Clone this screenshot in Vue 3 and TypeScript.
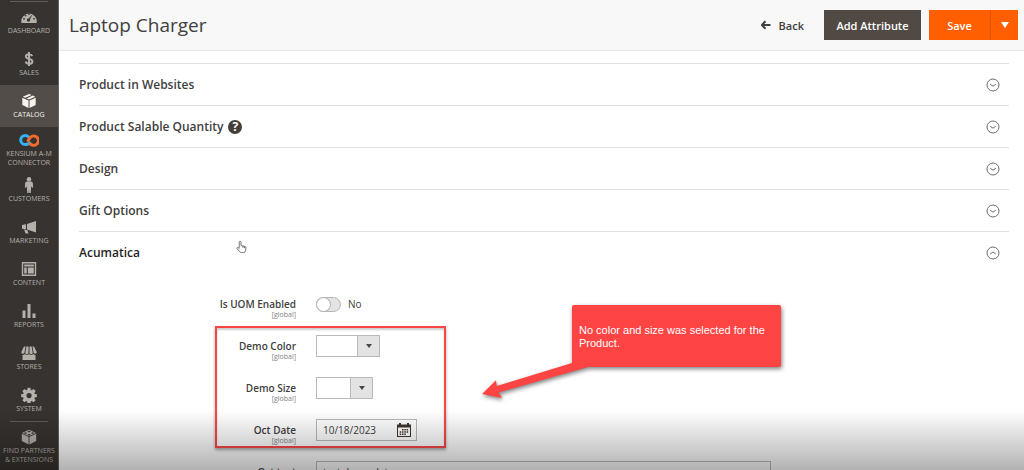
<script setup lang="ts">
import { ref } from 'vue'

interface MenuItem {
  id: string
  label: string
  active?: boolean
}

const menu: MenuItem[] = [
  { id: 'dashboard', label: 'Dashboard' },
  { id: 'sales', label: 'Sales' },
  { id: 'catalog', label: 'Catalog', active: true },
  { id: 'kensium', label: 'Kensium A-M Connector' },
  { id: 'customers', label: 'Customers' },
  { id: 'marketing', label: 'Marketing' },
  { id: 'pages', label: 'Content' },
  { id: 'reports', label: 'Reports' },
  { id: 'stores', label: 'Stores' },
  { id: 'system', label: 'System' },
  { id: 'partners', label: 'Find Partners & Extensions' },
]

const sections = [
  { title: 'Product in Websites', help: false, open: false },
  { title: 'Product Salable Quantity', help: true, open: false },
  { title: 'Design', help: false, open: false },
  { title: 'Gift Options', help: false, open: false },
  { title: 'Acumatica', help: false, open: true },
]

const uom = ref(false)
const color = ref('')
const size = ref('')
const octDate = ref('10/18/2023')
const octText = ref('test demo data')
</script>

<template>
  <div class="page">
    <nav class="sidebar" aria-label="Main menu">
      <a v-for="item in menu" :key="item.id" href="#" class="item" :class="[item.id, { active: item.active }]">
        <svg v-if="item.id === 'dashboard'" viewBox="0 0 16 16" class="icon">
          <path fill-rule="evenodd" d="M.5 14a7.700 7.700 0 1 1 15 0zM7.900 4.300a.8.8 0 1 0 .2 0zM4.500 5.700a.8.8 0 1 0 .2 0zM2.900 9a.8.8 0 1 0 .2 0zM12.900 9a.8.8 0 1 0 .2 0zM11.800 5 7.600 9.500a1.600 1.600 0 1 0 1.300.8z" />
        </svg>
        <svg v-else-if="item.id === 'sales'" viewBox="0 0 16 16" class="icon line">
          <path d="M11.200 5.200C10.700 3.800 9.600 3.300 8 3.300c-1.900 0-3.100.8-3.100 2.200 0 3.200 6.500 1.500 6.500 4.900 0 1.500-1.300 2.400-3.300 2.400-1.800 0-3.100-.8-3.500-2.300M8 1v14" />
        </svg>
        <svg v-else-if="item.id === 'catalog'" viewBox="0 0 16 16" class="icon">
          <path d="M8 1 10.600 2.100 4.300 4.800 1.800 3.700zM11.800 2.600 14.200 3.700 8 6.400 5.600 5.400zM1.300 4.700 7.500 7.400V15L1.300 12zM14.700 4.700 8.500 7.400V15l6.200-3z" />
        </svg>
        <svg v-else-if="item.id === 'kensium'" viewBox="0 0 20 12" class="icon wide">
          <path class="blue" d="M11.500 8.200C10.200 10 8.500 10.600 6.300 10.600a4.600 4.600 0 0 1 0-9.200c1.800 0 2.800.8 3.700 2" />
          <path class="orange" d="M8.500 7.800 11 3.700a4.700 4.700 0 1 1-.4 5.200" />
        </svg>
        <svg v-else-if="item.id === 'customers'" viewBox="0 0 16 16" class="icon">
          <circle cx="8" cy="2.200" r="2.200" />
          <path d="M5.800 4.600h4.400q1.400 0 1.600 1.500l.4 4.300-1.200.3-.8-2-.4 7.300H8.300L8 12l-.3 4H6.200l-.4-7.300-.8 2-1.200-.3.4-4.300q.2-1.500 1.600-1.500z" />
        </svg>
        <svg v-else-if="item.id === 'marketing'" viewBox="0 0 16 16" class="icon">
          <path d="M15 2v11.500L6 10.600V5.100zM1 6l4-.7v5L1 9.700zM3 10.500l3.500.8 1 3.200H4.600z" />
        </svg>
        <svg v-else-if="item.id === 'pages'" viewBox="0 0 16 16" class="icon">
          <path fill-rule="evenodd" d="M.8 1h14.400v14H.8zM2.200 2.400v11.200h11.600V2.400zM3.200 3.500h9.600v2H3.200zM3.200 6.500h2.500v6H3.200zM6.800 6.500h6v6h-6z" />
        </svg>
        <svg v-else-if="item.id === 'reports'" viewBox="0 0 16 16" class="icon">
          <path d="M1.500 7.500h3V15h-3zM6.500 1h3v14h-3zM11.500 10.500h3V15h-3z" />
        </svg>
        <svg v-else-if="item.id === 'stores'" viewBox="0 0 16 16" class="icon">
          <path d="M3 1.500h1.500L3.400 7.800a1.700 1.700 0 0 1-3.200-.5zM5.400 1.500h2.100v6a1.600 1.600 0 0 1-3.200.2zM8.500 1.500h2.100l1.100 6.200a1.600 1.600 0 0 1-3.200-.2zM11.500 1.500H13l2.800 5.800a1.700 1.700 0 0 1-3.200.5zM1.500 10q1.400.1 2.300-1 2.100 1.800 4.200 0 2.100 1.800 4.200 0 .9 1.100 2.300 1v5h-13z" />
        </svg>
        <svg v-else-if="item.id === 'system'" viewBox="0 0 16 16" class="icon">
          <path fill-rule="evenodd" d="M6.600.8h2.800l.4 2.100 1 .4 1.800-1.200 2 2-1.200 1.800.4 1 2.100.4v2.800l-2.100.4-.4 1 1.200 1.800-2 2-1.800-1.200-1 .4-.4 2.100H6.600l-.4-2.100-1-.4-1.800 1.200-2-2 1.200-1.800-.4-1-2.100-.4V7.300l2.100-.4.4-1-1.200-1.800 2-2 1.800 1.200 1-.4zM8 6a2.600 2.600 0 1 0 .1 0z" />
        </svg>
        <svg v-else viewBox="0 0 16 16" class="icon">
          <path fill-rule="evenodd" d="M8 .8 15 4 8 7.200 1 4zM8 1.700a1.500.7 0 1 0 .1 0zM4.400 3.300a1.500.7 0 1 0 .1 0zM11.600 3.300a1.500.7 0 1 0 .1 0zM8 4.900a1.500.7 0 1 0 .1 0zM.8 4.800 7.600 8v7.500L.8 12zM15.200 4.800 8.400 8v7.500l6.800-3.500z" />
        </svg>
        <span>{{ item.label }}</span>
      </a>
    </nav>

    <div class="main">
      <header class="header">
        <h1>Laptop Charger</h1>
        <button type="button" class="back">
          <svg viewBox="0 0 10 10"><path d="M9.500 5H1M4.500 1.200.8 5l3.700 3.800" /></svg>
          Back
        </button>
        <button type="button" class="btn dark">Add Attribute</button>
        <div class="split">
          <button type="button" class="btn save">Save</button>
          <button type="button" class="btn more" aria-label="More save options">
            <svg viewBox="0 0 8 6"><path d="M0 0h8L4 6z" /></svg>
          </button>
        </div>
      </header>

      <main class="content">
        <h2 v-for="s in sections" :key="s.title" class="section">
          <button type="button" :aria-expanded="s.open" :class="{ open: s.open }">
            <span>{{ s.title }}</span>
            <span v-if="s.help" class="help">?</span>
            <svg viewBox="0 0 14 14" class="chevron">
              <circle cx="7" cy="7" r="6" />
              <path :d="s.open ? 'M4.200 8 7 6l2.800 2' : 'M4.200 6.200 7 8.200l2.800-2'" />
            </svg>
          </button>
        </h2>

        <form class="form" @submit.prevent>
          <div class="field">
            <label for="uom">Is UOM Enabled<small>[global]</small></label>
            <div class="switch">
              <input id="uom" v-model="uom" type="checkbox" />
              <span>{{ uom ? 'Yes' : 'No' }}</span>
            </div>
          </div>
          <div class="marked">
            <div class="field">
              <label for="color">Demo Color<small>[global]</small></label>
              <div class="select color">
                <select id="color" v-model="color"><option value=""></option></select>
                <svg viewBox="0 0 6 4"><path d="M0 0h6L3 4z" /></svg>
              </div>
            </div>
            <div class="field">
              <label for="size">Demo Size<small>[global]</small></label>
              <div class="select size">
                <select id="size" v-model="size"><option value=""></option></select>
                <svg viewBox="0 0 6 4"><path d="M0 0h6L3 4z" /></svg>
              </div>
            </div>
            <div class="field">
              <label for="date">Oct Date<small>[global]</small></label>
              <div class="date">
                <input id="date" v-model="octDate" type="text" />
                <button type="button" aria-label="Choose date">
                  <svg viewBox="0 0 14 14">
                    <path fill-rule="evenodd" d="M0 1.500h2V0h2v1.500h6V0h2v1.500h2V14H0zM1 4.500V13h12V4.500z" />
                    <path d="M5 6h1.500v1.500H5zM7.300 6h1.500v1.500H7.300zM9.600 6h1.500v1.500H9.600zM2.700 8.300h1.500v1.500H2.700zM5 8.300h1.500v1.500H5zM7.300 8.300h1.500v1.500H7.300zM9.600 8.300h1.500v1.500H9.600zM2.700 10.600h1.500v1.500H2.700zM5 10.600h1.500v1.500H5zM7.300 10.600h1.500v1.500H7.300z" />
                  </svg>
                </button>
              </div>
            </div>
            <div class="frame"></div>
          </div>
          <div class="field">
            <label for="text">Oct text</label>
            <input id="text" v-model="octText" type="text" class="text" />
          </div>
        </form>
      </main>
    </div>

    <svg class="cursor" viewBox="0 0 12 14">
      <path d="M3.500 8.500V2q0-1.200 1-1.200t1 1.200v3.500l4.200.8q1.300.3 1.200 1.600l-.5 3.200q-.3 2-2.200 2H6q-1.300 0-2-1L1 8.600q-.3-1 .8-1 .8.100 1.700 1.200M7.500 6v2M9.300 6.400v1.800" />
    </svg>

    <div class="callout">
      <svg viewBox="0 0 106 40"><path d="M0 31 14 17.200 14.800 23 90 0 106 4 16.500 29.500 20 35z" /></svg>
      <p>No color and size was selected for the Product.</p>
    </div>
    <div class="shade"></div>
  </div>
</template>

<style>
body {
  margin: 0;
}
</style>

<style scoped>
* {
  box-sizing: border-box;
}
.page {
  position: relative;
  display: flex;
  height: 100vh;
  overflow: hidden;
  background: #fff;
  color: #41403e;
  font-family: "Open Sans", "Noto Sans", sans-serif;
  font-size: 10px;
}
button,
input,
select {
  font: inherit;
  color: inherit;
  margin: 0;
  padding: 0;
  border: 0;
  border-radius: 0;
  background: none;
}
.sidebar {
  flex: none;
  width: 59px;
  padding-top: 1px;
  background: #373330;
  border-right: 1px solid #65625f;
}
.item {
  position: relative;
  display: flex;
  flex-direction: column;
  align-items: center;
  height: 42px;
  padding-top: 8px;
  color: #b4b0aa;
  font-size: 7px;
  line-height: 9px;
  text-align: center;
  text-decoration: none;
  text-transform: uppercase;
}
.item.active {
  background: #524d49;
  color: #f7f3eb;
}
.item span {
  margin-top: 1px;
}
.item.kensium {
  padding-top: 5px;
}
.item.dashboard::before,
.item.partners::before {
  content: "";
  position: absolute;
  top: 0;
  left: 10px;
  right: 10px;
  border-top: 1px solid #5f5b57;
}
.icon {
  flex: none;
  width: 16px;
  height: 16px;
  fill: currentColor;
}
.icon.line {
  fill: none;
  stroke: currentColor;
  stroke-width: 2;
}
.icon.wide {
  width: 20px;
  fill: none;
  stroke-width: 3;
}
.blue {
  stroke: #35b2f2;
}
.orange {
  stroke: #f26b2c;
}
.main {
  flex: 1;
  min-width: 0;
}
.header {
  display: flex;
  align-items: center;
  height: 51px;
  padding: 0 6px 0 10px;
  background: #f8f8f8;
  border-bottom: 1px solid #e6e6e6;
}
h1 {
  flex: 1;
  margin: 0;
  font-size: 19px;
  font-weight: 400;
}
.back {
  display: flex;
  align-items: center;
  gap: 8px;
  margin-right: 20px;
  font-size: 11px;
  font-weight: 600;
}
.back svg {
  width: 10px;
  height: 10px;
  fill: none;
  stroke: currentColor;
  stroke-width: 2;
}
.btn {
  height: 30px;
  color: #fff;
  font-size: 11px;
  font-weight: 600;
}
.dark {
  width: 97px;
  margin-right: 8px;
  background: #514943;
}
.split {
  display: flex;
}
.save {
  width: 61px;
  background: #ff5f00;
}
.more {
  display: flex;
  align-items: center;
  justify-content: center;
  width: 28px;
  background: #ff5f00;
  border-left: 1px solid #df5200;
}
.more svg {
  width: 8px;
  height: 6px;
  fill: #fff;
}
.content {
  padding: 12px 15px 0 20px;
}
.section {
  margin: 0;
  border-top: 1px solid #e0e0e0;
  font-size: 12px;
  font-weight: 600;
}
.section button {
  display: flex;
  align-items: center;
  gap: 5px;
  width: 100%;
  height: 41px;
  padding-right: 9px;
}
.section .open {
  color: #1f1f1f;
}
.help {
  width: 14px;
  height: 14px;
  border-radius: 50%;
  background: #463f39;
  color: #fff;
  font-size: 12px;
  font-weight: 700;
  line-height: 14px;
}
.chevron {
  width: 14px;
  height: 14px;
  margin-left: auto;
  fill: none;
  stroke: #6d6d6d;
}
.form {
  padding-top: 20px;
}
.field {
  display: grid;
  grid-template-columns: 217px minmax(0, 455px);
  column-gap: 20px;
  align-items: start;
  height: 42px;
}
.field label {
  padding-top: 4px;
  font-weight: 600;
  line-height: 14px;
  text-align: right;
}
.field small {
  display: block;
  color: #808080;
  font-size: 7px;
  font-weight: 400;
  line-height: 8px;
}
.switch {
  display: flex;
  align-items: center;
  gap: 7px;
  height: 22px;
}
.switch input {
  display: flex;
  width: 25px;
  height: 15px;
  appearance: none;
  border: 1px solid #b5b5b5;
  border-radius: 8px;
  background: #e3e3e3;
}
.switch input::before {
  content: "";
  width: 13px;
  height: 13px;
  border-radius: 50%;
  background: #fff;
  box-shadow: 0 0 0 1px #b5b5b5;
}
.switch input:checked {
  justify-content: flex-end;
}
.marked {
  position: relative;
}
.frame {
  position: absolute;
  top: -9px;
  bottom: 13px;
  left: 136px;
  width: 231px;
  border: 2px solid #fb4646;
  box-shadow: 0 2px 3px rgba(0, 0, 0, 0.35), inset 0 2px 2px rgba(0, 0, 0, 0.2);
  pointer-events: none;
}
.select {
  position: relative;
  height: 22px;
}
.select.color {
  width: 64px;
}
.select.size {
  width: 57px;
}
.select select {
  display: block;
  width: 100%;
  height: 22px;
  appearance: none;
  border: 1px solid #b9b9b9;
  background: linear-gradient(to left, #e3e3e3 21px, #b9b9b9 21px, #b9b9b9 22px, #fff 22px);
}
.select svg {
  position: absolute;
  top: 9px;
  right: 8px;
  width: 6px;
  height: 4px;
  fill: #4c4742;
  pointer-events: none;
}
.date {
  display: flex;
  align-items: center;
  width: 101px;
  height: 22px;
  padding: 0 5px 0 6px;
  border: 1px solid #b9b9b9;
}
.date input {
  flex: 1;
  min-width: 0;
}
.date button {
  height: 14px;
}
.date svg {
  display: block;
  width: 14px;
  height: 14px;
  fill: #41362f;
}
.text {
  width: 100%;
  height: 22px;
  padding: 0 6px;
  border: 1px solid #b9b9b9;
}
.cursor {
  position: absolute;
  top: 240px;
  left: 236px;
  width: 11px;
  height: 14px;
  fill: #fff;
  stroke: #666;
}
.callout {
  position: absolute;
  top: 305px;
  left: 572px;
  width: 209px;
  height: 62px;
  padding: 19px 7px;
  border-radius: 2px;
  background: #ff4444;
  color: #fff;
  font-family: "Liberation Sans", Arial, sans-serif;
  font-size: 11px;
  line-height: 13px;
  filter: drop-shadow(1px 2px 2px rgba(0, 0, 0, 0.5));
}
.callout p {
  margin: 0;
}
.callout svg {
  position: absolute;
  top: 58px;
  left: -90px;
  width: 106px;
  height: 40px;
  fill: #ff4444;
}
.shade {
  position: absolute;
  right: 0;
  bottom: 0;
  left: 0;
  height: 60px;
  background: linear-gradient(rgba(0, 0, 0, 0), rgba(0, 0, 0, 0.3));
  pointer-events: none;
}
</style>
